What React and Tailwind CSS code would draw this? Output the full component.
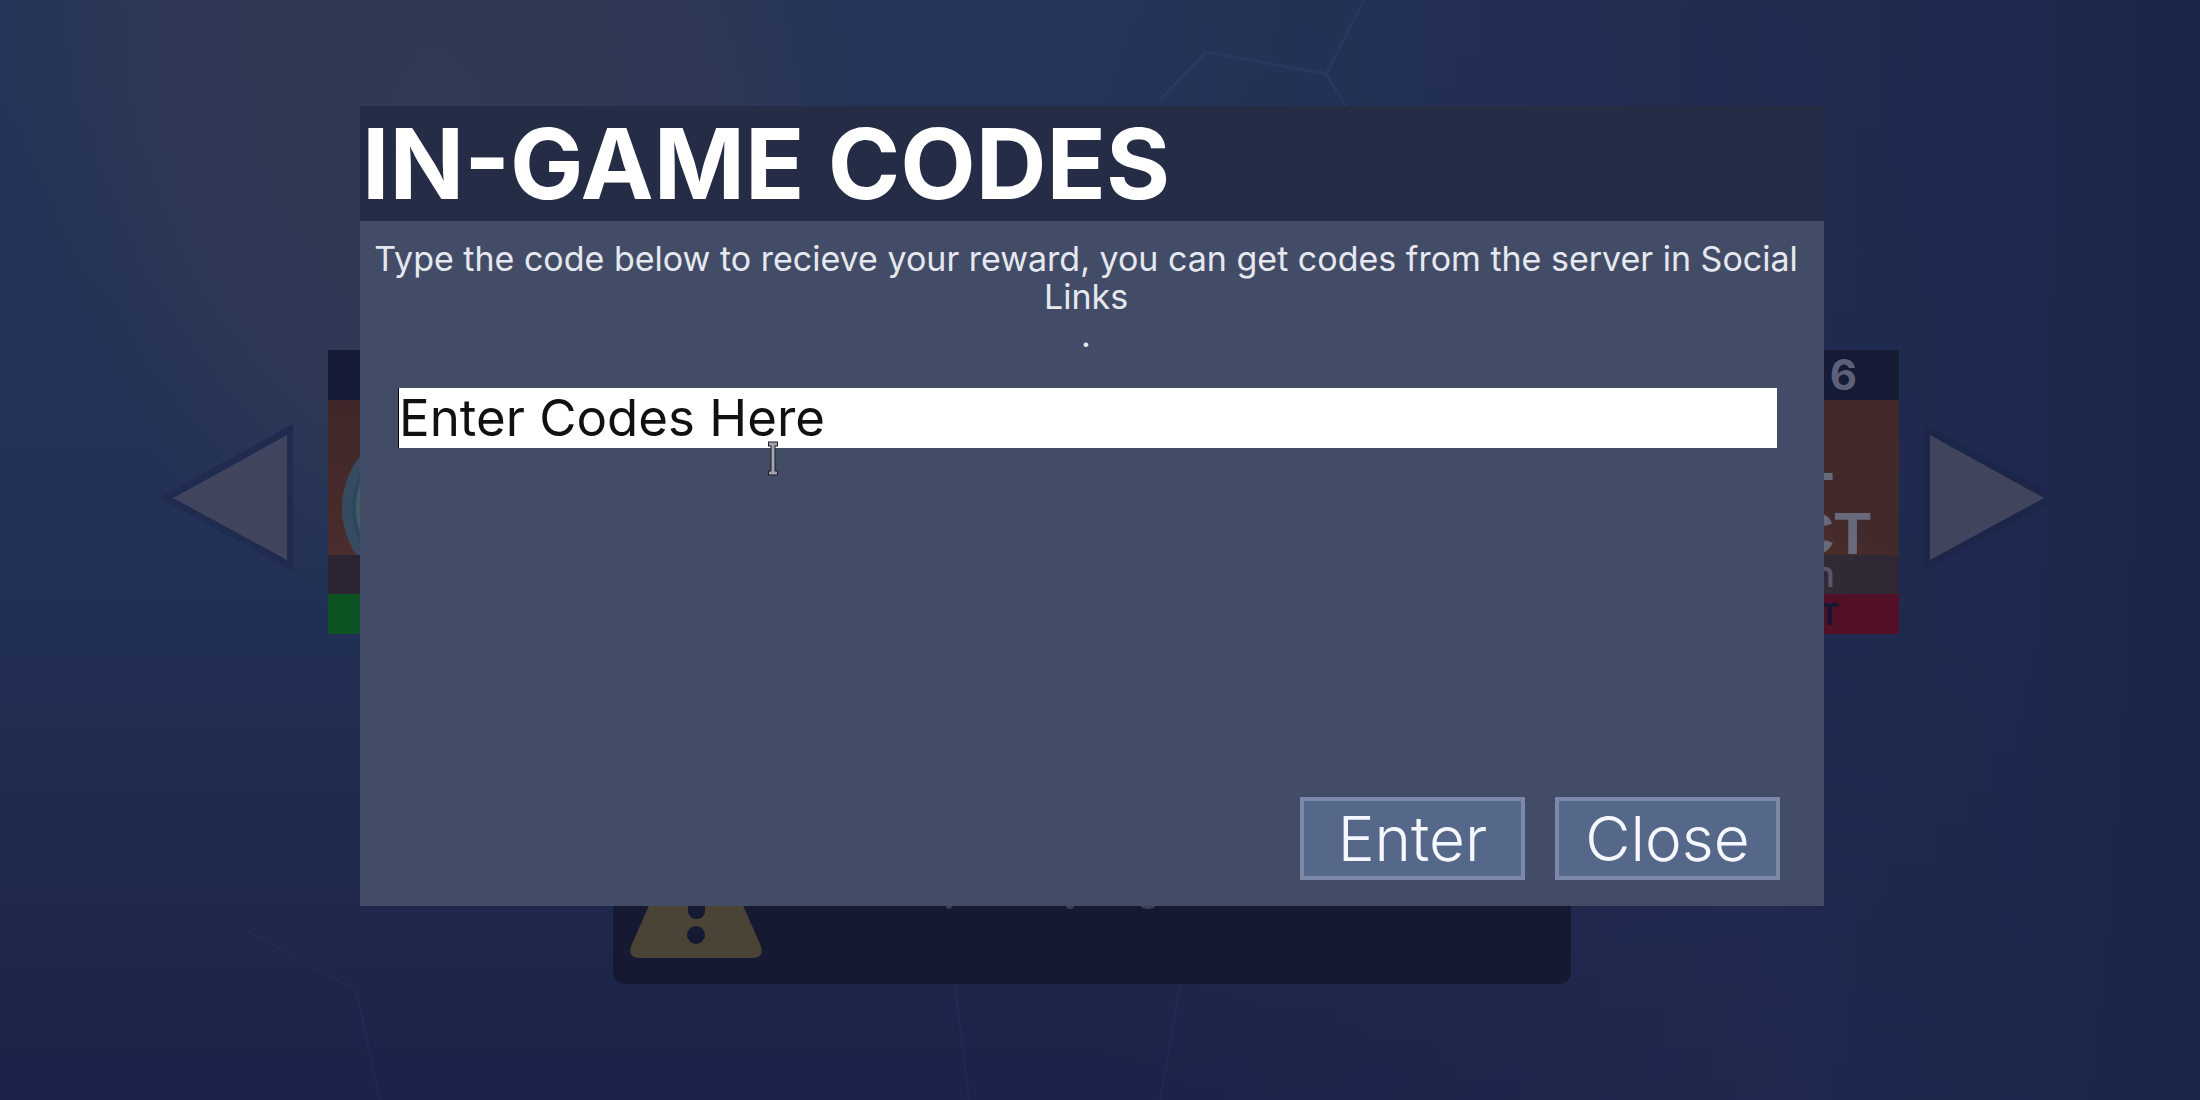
import { useState } from "react";

const Backdrop = () => (
    <svg className="absolute inset-0 h-full w-full" viewBox="0 0 2200 1100" preserveAspectRatio="none" aria-hidden="true">
        <defs>
            <linearGradient id="base" x1="0" y1="0" x2="0" y2="1">
                <stop offset="0" stopColor="#253458" />
                <stop offset="0.5" stopColor="#233156" />
                <stop offset="0.8" stopColor="#1f284d" />
                <stop offset="1" stopColor="#1c2249" />
            </linearGradient>
            <radialGradient id="haze" gradientUnits="userSpaceOnUse" cx="0" cy="0" r="1" gradientTransform="translate(440 110) rotate(-20) scale(420 580)">
                <stop offset="0" stopColor="#303a53" />
                <stop offset="0.65" stopColor="#2f3954" stopOpacity="0.85" />
                <stop offset="1" stopColor="#2a3757" stopOpacity="0" />
            </radialGradient>
            <linearGradient id="side" x1="0" y1="0" x2="1" y2="0">
                <stop offset="0.5" stopColor="#20294f" stopOpacity="0" />
                <stop offset="0.8" stopColor="#20294f" stopOpacity="0.8" />
                <stop offset="0.92" stopColor="#1c284d" stopOpacity="0.9" />
                <stop offset="1" stopColor="#1b2548" />
            </linearGradient>
        </defs>
        <rect width="2200" height="1100" fill="url(#base)" />
        <rect width="2200" height="1100" fill="url(#haze)" />
        <rect width="2200" height="1100" fill="url(#side)" />
        <g fill="none" stroke="#31456f" strokeOpacity="0.35" strokeWidth="3">
            <path d="M1160 100l46-48 120 22 38-74M1326 74l20 32" />
            <path strokeOpacity="0.15" d="M960 0l26 100M760 140l-40-60M380 1100l-24-110 -110-60M955 985l14 115M1180 985l-20 115" />
        </g>
    </svg>
);

const Arrow = ({ label, flip }) => (
    <button aria-label={label} className="mt-[70px] h-[152px] w-[140px] shrink-0">
        <svg viewBox="0 0 140 152" className={flip ? "h-full w-full -scale-x-100" : "h-full w-full"}>
            <path d="M4 78L138 4V151Z" fill={flip ? "#1b2648" : "#1f2b4f"} />
            <path d="M18 78L132 15V140Z" fill="#40445c" />
        </svg>
    </button>
);

const Carousel = () => (
    <section className="relative flex justify-between pt-[350px] pl-[155px] pr-[138px]">
        <Arrow label="Previous" />
        <div className="flex grow justify-between pl-[33px] pr-[23px]">
            <article className="w-60">
                <div className="h-[50px] bg-[#151a35]"></div>
                <div className="h-[155px] overflow-hidden bg-linear-to-b from-[#412729] to-[#4a2d2c]">
                    <svg width="240" height="155" aria-hidden="true">
                        <circle cx="98" cy="108" r="84" fill="#364b5f" />
                        <circle cx="98" cy="108" r="72" fill="#435c66" stroke="#2b485c" strokeWidth="4" />
                    </svg>
                </div>
                <div className="h-[39px] bg-[#2c2434]"></div>
                <div className="h-10 bg-[#0c5222]"></div>
            </article>
            <article className="w-60 text-right">
                <div className="h-[50px] bg-[#151a35] pr-[42px] text-[42px] leading-[50px] font-bold text-[#5c6079]">6</div>
                <div className="h-[155px] bg-linear-to-tr from-[#633325] via-[#422a2b] to-[#43292a] pr-7 font-['Liberation_Sans_Narrow','Liberation_Sans',sans-serif] text-6xl font-bold text-[#68697a]">
                    <div className="h-28 pt-[42px] pr-9 leading-[60px]">-</div>
                    <div className="leading-[43px]">CT</div>
                </div>
                <div className="h-[39px] bg-linear-to-r from-[#332c3d] to-[#302934] pr-16 text-4xl leading-[38px] font-medium text-[#5b566a]">n</div>
                <div className="h-10 bg-[#511026] pr-[60px] text-3xl leading-10 font-bold text-[#171633]">T</div>
            </article>
        </div>
        <Arrow label="Next" flip />
    </section>
);

const Notice = () => (
    <section className="relative flex justify-center pt-[166px] pr-4">
        <div className="h-[184px] w-[958px] rounded-xl bg-[#151931]">
            <svg width="958" height="184" aria-hidden="true">
                <path d="M72 24q11-20 22 0l53 120q6 14-8 14H27q-14 0-8-14z" fill="#4b4336" />
                <rect x="75" y="60" width="17" height="59" rx="8" fill="#151931" />
                <ellipse cx="83" cy="135" rx="9" ry="9" fill="#151931" />
                <g fill="#3c4057">
                    <ellipse cx="336" cy="106" rx="3" ry="3" />
                    <ellipse cx="457" cy="106" rx="4" ry="3" />
                    <ellipse cx="535" cy="106" rx="7" ry="3" />
                </g>
            </svg>
        </div>
    </section>
);

const CodeDialog = () => {
    const [code, setCode] = useState("");

    return (
        <form role="dialog" aria-labelledby="title" className="flex min-h-[800px] w-full flex-col bg-[#434c66]" onSubmit={(e) => e.preventDefault()}>
            <h1 id="title" className="bg-[#252c46] pl-0.5 text-[98px] leading-[115px] font-bold text-white">IN-GAME CODES</h1>
            <label htmlFor="code" className="pt-[19px] pr-3 text-center text-[34px] leading-[38px] text-[#e6e8f0]">
                Type the code below to recieve your reward, you can get codes from the server in Social Links
                <br />.
            </label>
            <input
                id="code"
                type="text"
                value={code}
                onChange={(e) => setCode(e.target.value)}
                placeholder="Enter Codes Here"
                className="mt-[34px] mr-[47px] ml-[38px] h-[60px] border-l border-black bg-white text-[51px] text-black outline-none placeholder:text-[#111]"
            />
            <div className="mt-auto flex justify-end gap-[30px] pr-11 pb-[26px]">
                <button type="submit" className="h-[83px] w-[225px] border-4 border-[#7c88a8] bg-[#566889] text-[62px] leading-[75px] font-light text-[#f5f7ff]">Enter</button>
                <button type="button" className="h-[83px] w-[225px] border-4 border-[#7c88a8] bg-[#566889] text-[62px] leading-[75px] font-light text-[#f5f7ff]">Close</button>
            </div>
        </form>
    );
};

export default function App() {
    return (
        <main className="relative min-h-screen overflow-hidden bg-[#22315a] font-[Inter,sans-serif]">
            <Backdrop />
            <Carousel />
            <Notice />
            <div className="absolute inset-0 pt-[106px] pr-[376px] pl-[360px]">
                <CodeDialog />
            </div>
            {/* text cursor */}
            <svg className="absolute top-[441px] left-[766px]" width="14" height="36" viewBox="0 0 14 36" aria-hidden="true">
                <path d="M2 3h10M7 4v28M2 32h10" fill="none" stroke="#1c1c22" strokeWidth="5" />
                <path d="M3 3h3l1 1 1-1h3M7 4v28M3 32h3l1-1 1 1h3" fill="none" stroke="#a3a5ad" strokeWidth="3" />
            </svg>
        </main>
    );
}
